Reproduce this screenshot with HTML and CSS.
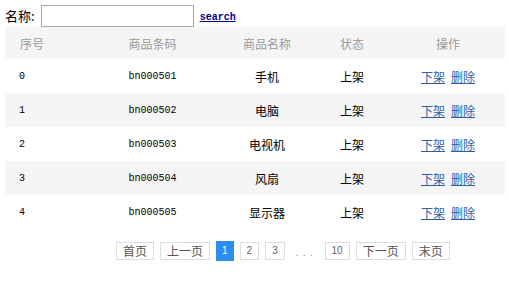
FILE: index.html
```html
<!DOCTYPE html>
<html>
<head>
<meta charset="utf-8">
<link rel="stylesheet" href="styles.css">
</head>
<body>
<div class="page">
  <div class="search">
    <label class="label">名称:</label>
    <input class="input" type="text">
    <a class="search-link" href="#">search</a>
  </div>
  <div class="table">
    <div class="row head">
      <div class="c c1">序号</div>
      <div class="c">商品条码</div>
      <div class="c">商品名称</div>
      <div class="c">状态</div>
      <div class="c">操作</div>
    </div>
    <div class="row">
      <div class="c c1 mono">0</div>
      <div class="c mono">bn000501</div>
      <div class="c">手机</div>
      <div class="c">上架</div>
      <div class="c ops"><a href="#">下架</a><a href="#">删除</a></div>
    </div>
    <div class="row alt">
      <div class="c c1 mono">1</div>
      <div class="c mono">bn000502</div>
      <div class="c">电脑</div>
      <div class="c">上架</div>
      <div class="c ops"><a href="#">下架</a><a href="#">删除</a></div>
    </div>
    <div class="row">
      <div class="c c1 mono">2</div>
      <div class="c mono">bn000503</div>
      <div class="c">电视机</div>
      <div class="c">上架</div>
      <div class="c ops"><a href="#">下架</a><a href="#">删除</a></div>
    </div>
    <div class="row alt">
      <div class="c c1 mono">3</div>
      <div class="c mono">bn000504</div>
      <div class="c">风扇</div>
      <div class="c">上架</div>
      <div class="c ops"><a href="#">下架</a><a href="#">删除</a></div>
    </div>
    <div class="row">
      <div class="c c1 mono">4</div>
      <div class="c mono">bn000505</div>
      <div class="c">显示器</div>
      <div class="c">上架</div>
      <div class="c ops"><a href="#">下架</a><a href="#">删除</a></div>
    </div>
  </div>
  <div class="pager">
    <span class="pg">首页</span>
    <span class="pg">上一页</span>
    <span class="pg num active">1</span>
    <span class="pg num">2</span>
    <span class="pg num">3</span>
    <span class="dots">. . .</span>
    <span class="pg num">10</span>
    <span class="pg">下一页</span>
    <span class="pg">末页</span>
  </div>
</div>
</body>
</html>
```
FILE: styles.css
```css
html, body {
  margin: 0;
  padding: 0;
  background: #fff;
}
body {
  font-family: "Noto Sans CJK SC", "Noto Sans", sans-serif;
  font-size: 12px;
  color: #000;
}
.page {
  padding: 5px 4px 0 5px;
}
.search {
  display: flex;
  align-items: center;
  height: 22px;
}
.label {
  font-size: 13px;
  line-height: 22px;
  margin-right: 6px;
}
.input {
  box-sizing: border-box;
  width: 153px;
  height: 22px;
  border: 1px solid #a9a9a9;
  margin: 0;
  padding: 0 2px;
}
.search-link {
  margin-left: 6px;
  font-family: "Liberation Mono", monospace;
  font-size: 10px;
  font-weight: bold;
  color: #00008b;
  margin-top: 2px;
}
.table {
  width: 500px;
}
.row {
  display: grid;
  grid-template-columns: 79px 137px 92px 78px 114px;
  height: 34px;
  align-items: center;
}
.row.head {
  height: 32px;
  background: #f5f5f5;
  color: #9a9a9a;
  font-size: 12px;
}
.row.alt {
  background: #f5f5f5;
}
.c {
  text-align: center;
  white-space: nowrap;
}
.c1 {
  text-align: left;
  padding-left: 14px;
}
.head .c1 {
  padding-left: 15px;
}
.mono {
  font-family: "Liberation Mono", monospace;
  font-size: 10px;
}
.ops {
  display: flex;
  justify-content: center;
  gap: 6px;
}
.ops a {
  color: #2d5ea6;
  text-decoration: underline;
}
.pager {
  display: flex;
  align-items: center;
  gap: 6px;
  padding-left: 111px;
  margin-top: 12px;
}
.pg {
  box-sizing: border-box;
  height: 18px;
  line-height: 16px;
  border: 1px solid #dcdcdc;
  padding: 0 6px;
  color: #555;
  font-size: 12px;
}
.pg.num {
  font-family: "Liberation Sans", sans-serif;
  font-size: 10px;
  padding: 0 6px;
  color: #666;
}
.pg.active {
  height: 20px;
  line-height: 18px;
  padding: 0 5px;
  background: #2d8cf0;
  border-color: #2d8cf0;
  color: #fff;
}
.dots {
  color: #999;
  font-size: 10px;
  margin: 0 5px;
  letter-spacing: 1px;
}
```
